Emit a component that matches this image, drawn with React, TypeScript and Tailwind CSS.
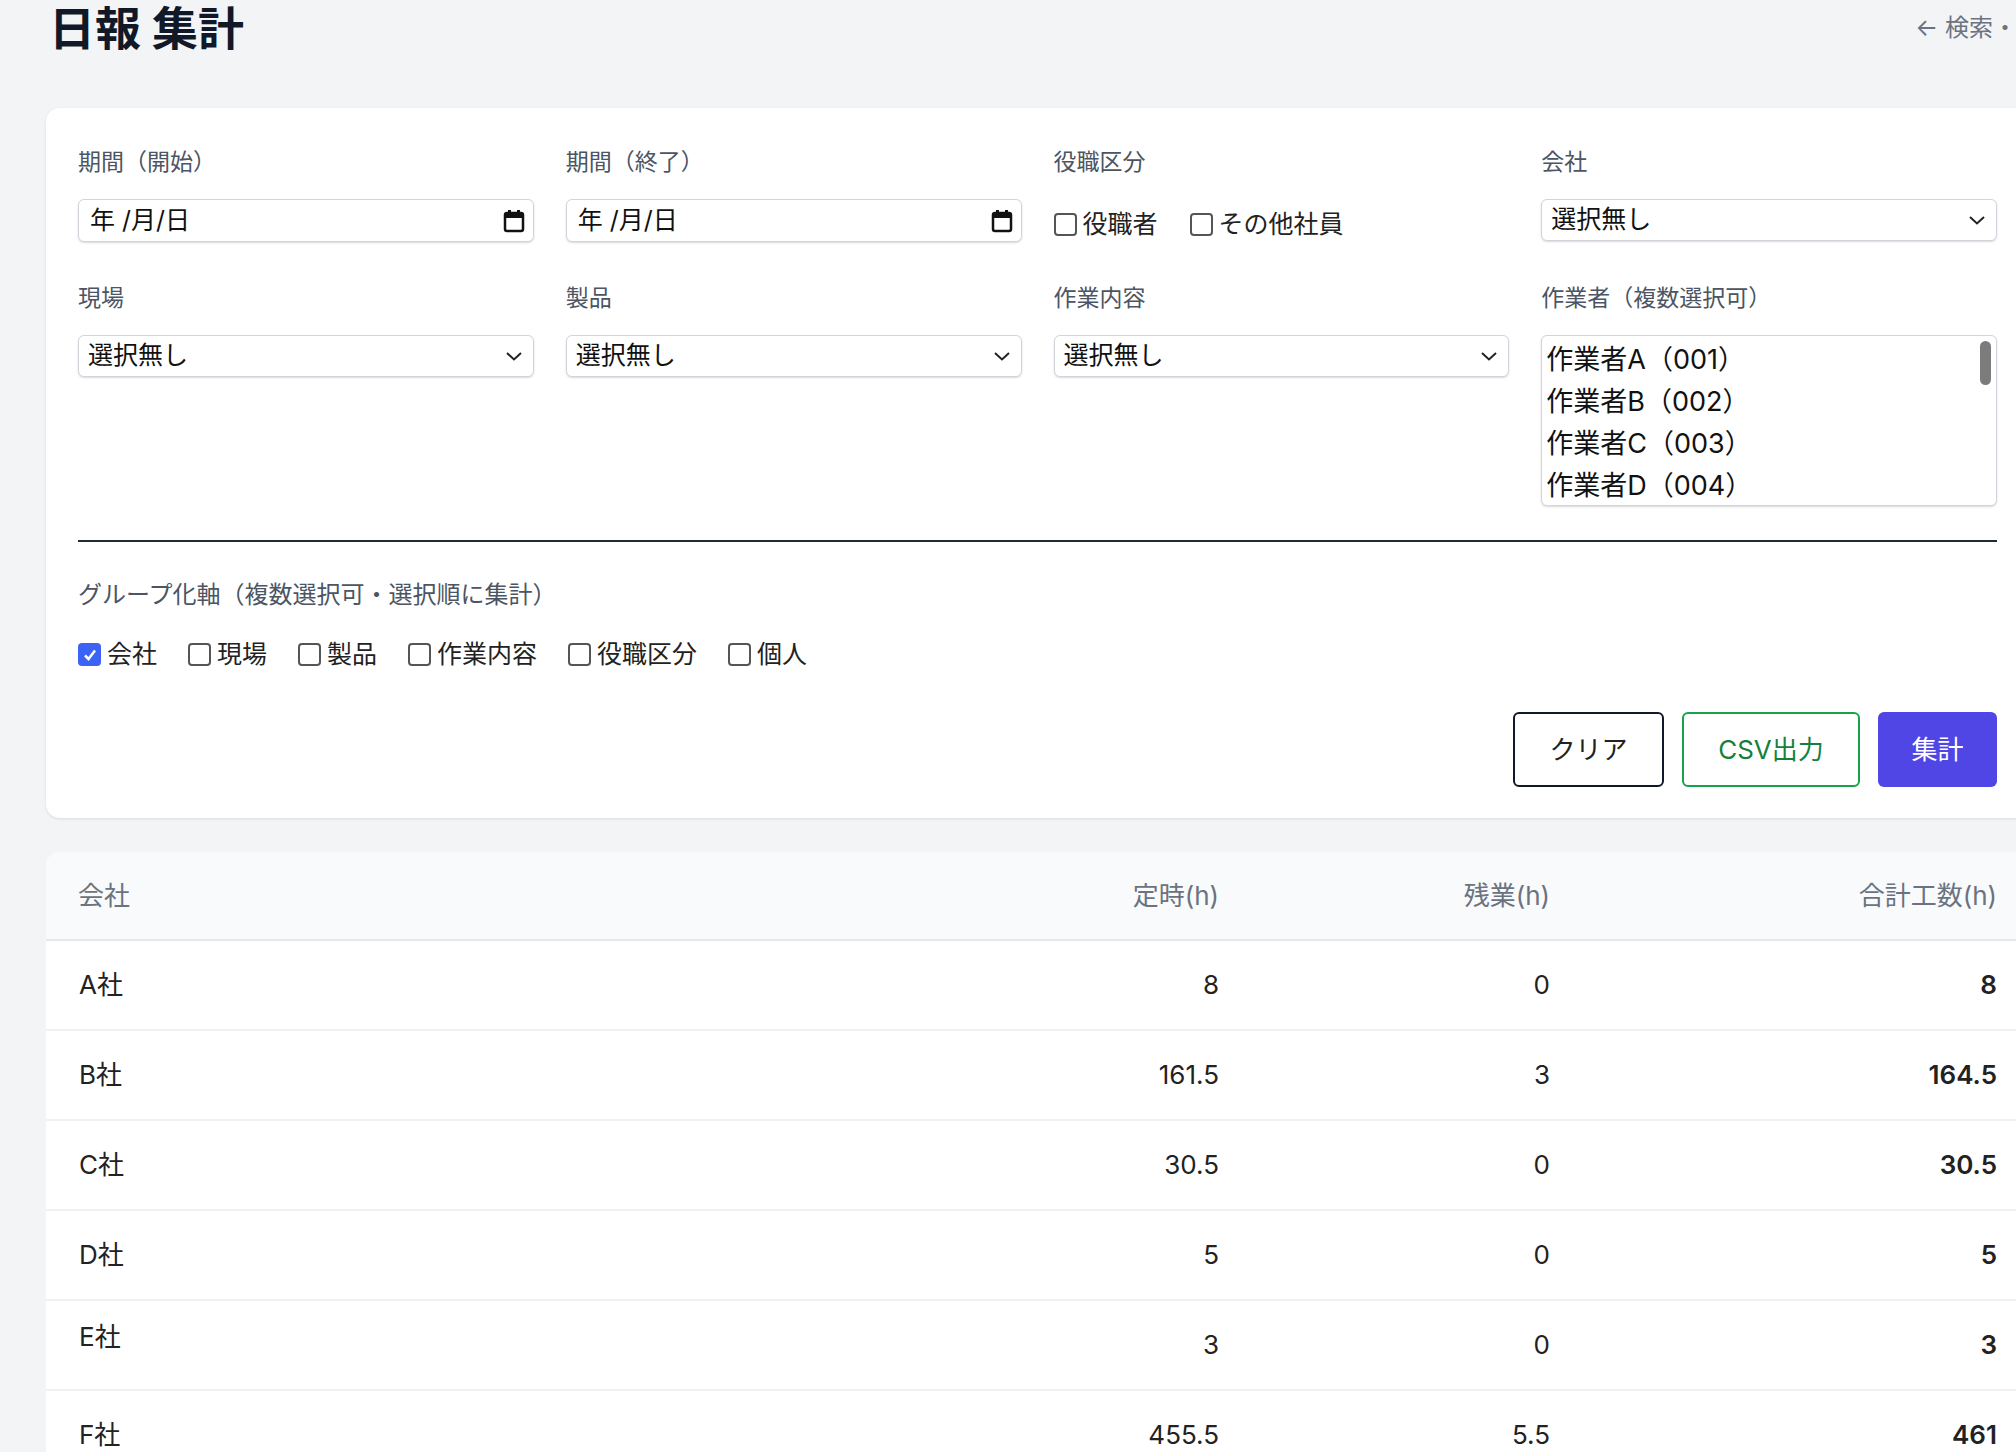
import React from "react";

const font = { fontFamily: "Inter, 'Noto Sans CJK JP', 'Noto Sans', sans-serif" };

function Cal() {
  return (
    <svg width="22" height="24" viewBox="0 0 22 24">
      <rect x="2" y="4" width="18" height="18" rx="2" fill="none" stroke="#111" strokeWidth="2.5" />
      <rect x="2" y="4" width="18" height="5" fill="#111" />
      <rect x="5" y="1" width="3" height="4" fill="#111" />
      <rect x="14" y="1" width="3" height="4" fill="#111" />
    </svg>
  );
}

function Chevron() {
  return (
    <svg width="18" height="12" viewBox="0 0 18 12">
      <path d="M2 3 L9 9.5 L16 3" fill="none" stroke="#222" strokeWidth="2" />
    </svg>
  );
}

function Field({ label, children }: { label: string; children: React.ReactNode }) {
  return (
    <div className="flex flex-col">
      <div className="text-[23px] text-[#4b5563] h-[29px] leading-[29px] mb-[22px]">{label}</div>
      {children}
    </div>
  );
}

function DateBox() {
  return (
    <div className="h-[43px] rounded-md border border-[#d1d5db] shadow-[0_1px_2px_rgba(0,0,0,0.15)] bg-white flex items-center justify-between pl-[11px] pr-[8px] text-[25px] text-[#111]">
      <span>年 /月/日</span>
      <Cal />
    </div>
  );
}

function Sel() {
  return (
    <div className="h-[42px] rounded-md border border-[#d1d5db] shadow-[0_1px_2px_rgba(0,0,0,0.15)] bg-white flex items-center justify-between pl-[9px] pr-[10px] text-[25px] text-[#111]">
      <span>選択無し</span>
      <Chevron />
    </div>
  );
}

function Check({ label, checked = false }: { label: string; checked?: boolean }) {
  return (
    <label className="flex items-center gap-[6px] text-[25px] text-[#222]">
      {checked ? (
        <span className="w-[23px] h-[23px] rounded-[4px] bg-[#3b63f6] flex items-center justify-center">
          <svg width="16" height="16" viewBox="0 0 16 16">
            <path d="M3 8.5 L6.5 12 L13 3.5" fill="none" stroke="white" strokeWidth="2.5" />
          </svg>
        </span>
      ) : (
        <span className="w-[23px] h-[23px] rounded-[4px] border-2 border-[#555] bg-white" />
      )}
      <span>{label}</span>
    </label>
  );
}

const rows = [
  ["A社", "8", "0", "8"],
  ["B社", "161.5", "3", "164.5"],
  ["C社", "30.5", "0", "30.5"],
  ["D社", "5", "0", "5"],
  ["E社", "3", "0", "3"],
  ["F社", "455.5", "5.5", "461"],
];

export default function App() {
  return (
    <div className="min-h-[1452px] bg-[#f3f4f6] overflow-hidden" style={font}>
      <div className="w-[2100px] pl-[46px]">
        <div className="flex items-start justify-between w-[1983px] h-[108px]">
          <h1 className="text-[46px] font-bold text-[#111827] leading-[56px] pl-[3px]">日報 集計</h1>
          <div className="text-[24px] text-[#6b7280] leading-[56px] mr-[-60px]">← 検索・一覧へ</div>
        </div>
        <div className="w-[1983px] bg-white rounded-[14px] shadow-[0_1px_3px_rgba(0,0,0,0.1)] px-[32px] pt-[40px] pb-[31px]">
          <div className="grid grid-cols-4 gap-x-[32px]">
            <Field label="期間（開始）"><DateBox /></Field>
            <Field label="期間（終了）"><DateBox /></Field>
            <Field label="役職区分">
              <div className="flex items-center gap-[32px] h-[43px] pt-[8px]">
                <Check label="役職者" />
                <Check label="その他社員" />
              </div>
            </Field>
            <Field label="会社"><Sel /></Field>
          </div>
          <div className="grid grid-cols-4 gap-x-[32px] mt-[42px]">
            <Field label="現場"><Sel /></Field>
            <Field label="製品"><Sel /></Field>
            <Field label="作業内容"><Sel /></Field>
            <Field label="作業者（複数選択可）">
              <div className="h-[171px] rounded-md border border-[#d1d5db] shadow-[0_1px_2px_rgba(0,0,0,0.15)] bg-white relative pl-[4px] pt-[3px] text-[27px] text-[#111] leading-[42px] overflow-hidden">
                <div>作業者A（001）</div>
                <div>作業者B（002）</div>
                <div>作業者C（003）</div>
                <div>作業者D（004）</div>
                <div className="absolute right-[5px] top-[5px] w-[11px] h-[44px] rounded-full bg-[#7c7c7c]" />
              </div>
            </Field>
          </div>
          <div className="h-[2px] bg-[#1f2937] mt-[34px]" />
          <div className="text-[24px] text-[#4b5563] mt-[38px] leading-[30px]">グループ化軸（複数選択可・選択順に集計）</div>
          <div className="flex items-center gap-[31px] mt-[26px]">
            <Check label="会社" checked />
            <Check label="現場" />
            <Check label="製品" />
            <Check label="作業内容" />
            <Check label="役職区分" />
            <Check label="個人" />
          </div>
          <div className="flex justify-end gap-[18px] mt-[38px]">
            <button className="w-[151px] h-[75px] rounded-md border-2 border-[#111827] text-[26px] text-[#222] bg-white">クリア</button>
            <button className="w-[178px] h-[75px] rounded-md border-2 border-[#16a34a] text-[26px] text-[#15803d] bg-white">CSV出力</button>
            <button className="w-[119px] h-[75px] rounded-md bg-[#4f46e5] text-[26px] text-white">集計</button>
          </div>
        </div>
        <div className="w-[1983px] bg-white rounded-t-[14px] mt-[34px] overflow-hidden">
          <table className="w-[1983px] border-collapse text-[26px]">
            <thead>
              <tr className="bg-[#f9fafb] border-b-2 border-[#e5e7eb] h-[88px] text-[#6b7280]">
                <th className="text-left font-normal pl-[32px]">会社</th>
                <th className="text-right font-normal w-[400px]">定時(h)</th>
                <th className="text-right font-normal w-[331px]">残業(h)</th>
                <th className="text-right font-normal w-[479px] pr-[32px]">合計工数(h)</th>
              </tr>
            </thead>
            <tbody>
              {rows.map((r) => (
                <tr key={r[0]} className="h-[90px] border-b-2 border-[#f0f1f3] text-[#222]">
                  <td className={"pl-[33px] " + (r[0] === "E社" ? "align-top pt-[16px]" : "")}>{r[0]}</td>
                  <td className="text-right">{r[1]}</td>
                  <td className="text-right">{r[2]}</td>
                  <td className="text-right font-semibold pr-[32px]">{r[3]}</td>
                </tr>
              ))}
            </tbody>
          </table>
        </div>
      </div>
    </div>
  );
}
